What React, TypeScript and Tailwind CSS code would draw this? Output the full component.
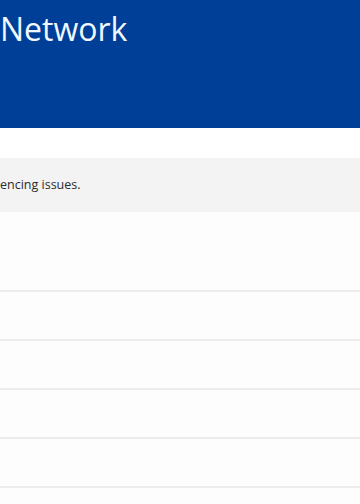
export default function App() {
  const rows = [0, 1, 2, 3, 4];

  return (
    <div
      className="w-[360px] h-[504px] overflow-hidden bg-[#fdfdfd]"
      style={{ fontFamily: '"Open Sans", "Noto Sans", sans-serif' }}
    >
      {/* Header */}
      <div className="h-[128px] bg-[#003f97] overflow-hidden">
        <h1 className="pt-[5px] text-[32px] leading-[48px] text-[#f2f8ff] whitespace-nowrap">
          Network
        </h1>
      </div>

      <div className="h-[30px] bg-white" />

      {/* Notice */}
      <div className="h-[54px] bg-[#f3f3f3] flex items-center overflow-hidden">
        <p className="text-[12.5px] text-[#2b2b2b] whitespace-nowrap pt-[1px]">
          encing issues.
        </p>
      </div>

      {/* List */}
      <div className="h-[80px] border-b-2 border-[#ececec]" />
      {rows.map((r) => (
        <div key={r} className="h-[49px] border-b-2 border-[#ececec]" />
      ))}
    </div>
  );
}
